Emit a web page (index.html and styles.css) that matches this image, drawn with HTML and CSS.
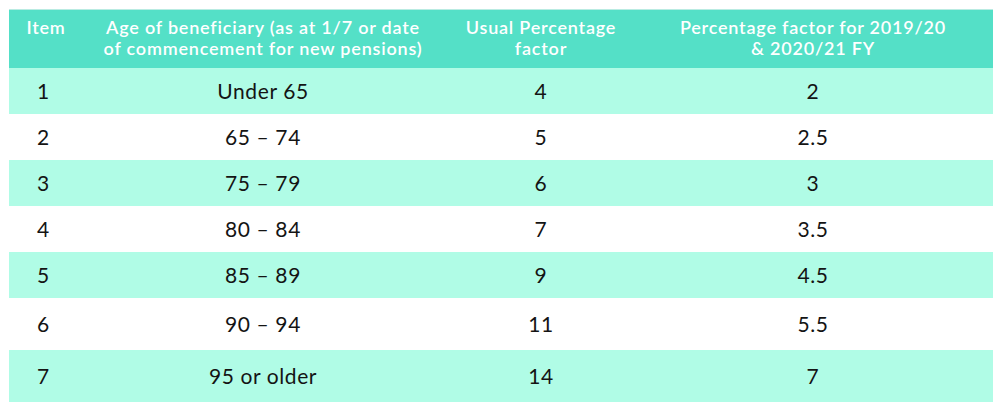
FILE: index.html
```html
<!DOCTYPE html>
<html>
<head>
<meta charset="utf-8">
<link rel="stylesheet" href="styles.css">
</head>
<body>
<table class="factors">
  <colgroup>
    <col class="c-item"><col class="c-age"><col class="c-usual"><col class="c-temp">
  </colgroup>
  <thead>
    <tr>
      <th>Item</th>
      <th>Age of beneficiary (as at 1/7 or date<br>of commencement for new pensions)</th>
      <th>Usual Percentage<br>factor</th>
      <th>Percentage factor for 2019/20<br>&amp; 2020/21 FY</th>
    </tr>
  </thead>
  <tbody>
    <tr class="alt"><td>1</td><td>Under 65</td><td>4</td><td>2</td></tr>
    <tr><td>2</td><td>65 – 74</td><td>5</td><td>2.5</td></tr>
    <tr class="alt"><td>3</td><td>75 – 79</td><td>6</td><td>3</td></tr>
    <tr><td>4</td><td>80 – 84</td><td>7</td><td>3.5</td></tr>
    <tr class="alt"><td>5</td><td>85 – 89</td><td>9</td><td>4.5</td></tr>
    <tr class="tall"><td>6</td><td>90 – 94</td><td>11</td><td>5.5</td></tr>
    <tr class="alt tall"><td>7</td><td>95 or older</td><td>14</td><td>7</td></tr>
  </tbody>
</table>
</body>
</html>
```
FILE: styles.css
```css
html, body {
  margin: 0;
  padding: 0;
  background: #ffffff;
}
body {
  padding: 9px 11px 0 9px;
  font-family: "Lato", "Liberation Sans", sans-serif;
}
.factors {
  border-collapse: collapse;
  table-layout: fixed;
  width: 984px;
  border-top: 1px solid #b9ebe2;
}
.c-item { width: 74px; }
.c-age { width: 360px; }
.c-usual { width: 196px; }
.c-temp { width: 354px; }

.factors th {
  background: #54e0c7;
  color: #ffffff;
  font-weight: 600;
  font-size: 18px;
  letter-spacing: 0.8px;
  line-height: 21px;
  height: 58px;
  padding: 7px 0 0 0;
  vertical-align: top;
  text-align: center;
  box-sizing: border-box;
}
.factors td {
  height: 46px;
  padding: 0;
  font-size: 21px;
  letter-spacing: 0.6px;
  color: #141414;
  text-align: center;
  vertical-align: middle;
  box-sizing: border-box;
}
.factors td:first-child {
  text-align: left;
  padding-left: 28px;
}
.factors td:last-child {
  padding-right: 6px;
}
.factors th:last-child {
  padding-right: 6px;
}
.factors tr.tall td {
  height: 52px;
}
.factors tr.alt td {
  background: #b0fce6;
}
```
